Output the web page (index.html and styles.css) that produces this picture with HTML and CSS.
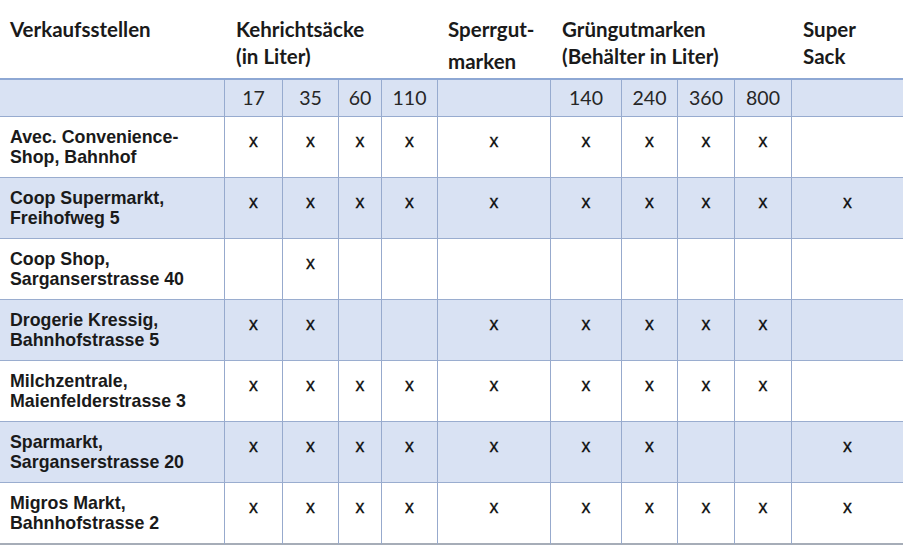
FILE: index.html
```html
<!DOCTYPE html>
<html lang="de">
<head>
<meta charset="utf-8">
<title>Verkaufsstellen</title>
<link rel="stylesheet" href="styles.css">
</head>
<body>
<table class="grid">
  <colgroup>
    <col class="c-name">
    <col class="c-17"><col class="c-35"><col class="c-60"><col class="c-110">
    <col class="c-sperr">
    <col class="c-140"><col class="c-240"><col class="c-360"><col class="c-800">
    <col class="c-super">
  </colgroup>
  <thead>
    <tr class="head">
      <th class="h-name">Verkaufsstellen</th>
      <th colspan="4">Kehrichtsäcke<br>(in Liter)</th>
      <th class="h-sperr"><span class="l1">Sperrgut-</span><span class="l2">marken</span></th>
      <th colspan="4">Grüngutmarken<br>(Behälter in Liter)</th>
      <th>Super<br>Sack</th>
    </tr>
    <tr class="sizes">
      <td class="first"></td>
      <td>17</td><td>35</td><td>60</td><td>110</td>
      <td></td>
      <td>140</td><td>240</td><td>360</td><td>800</td>
      <td></td>
    </tr>
  </thead>
  <tbody>
    <tr>
      <td class="name">Avec. Convenience-<br>Shop, Bahnhof</td>
      <td class="m">x</td><td class="m">x</td><td class="m">x</td><td class="m">x</td>
      <td class="m">x</td>
      <td class="m">x</td><td class="m">x</td><td class="m">x</td><td class="m">x</td>
      <td class="m"></td>
    </tr>
    <tr class="band">
      <td class="name">Coop Supermarkt,<br>Freihofweg 5</td>
      <td class="m">x</td><td class="m">x</td><td class="m">x</td><td class="m">x</td>
      <td class="m">x</td>
      <td class="m">x</td><td class="m">x</td><td class="m">x</td><td class="m">x</td>
      <td class="m">x</td>
    </tr>
    <tr>
      <td class="name">Coop Shop,<br>Sarganserstrasse 40</td>
      <td class="m"></td><td class="m">x</td><td class="m"></td><td class="m"></td>
      <td class="m"></td>
      <td class="m"></td><td class="m"></td><td class="m"></td><td class="m"></td>
      <td class="m"></td>
    </tr>
    <tr class="band">
      <td class="name">Drogerie Kressig,<br>Bahnhofstrasse 5</td>
      <td class="m">x</td><td class="m">x</td><td class="m"></td><td class="m"></td>
      <td class="m">x</td>
      <td class="m">x</td><td class="m">x</td><td class="m">x</td><td class="m">x</td>
      <td class="m"></td>
    </tr>
    <tr>
      <td class="name">Milchzentrale,<br>Maienfelderstrasse 3</td>
      <td class="m">x</td><td class="m">x</td><td class="m">x</td><td class="m">x</td>
      <td class="m">x</td>
      <td class="m">x</td><td class="m">x</td><td class="m">x</td><td class="m">x</td>
      <td class="m"></td>
    </tr>
    <tr class="band">
      <td class="name">Sparmarkt,<br>Sarganserstrasse 20</td>
      <td class="m">x</td><td class="m">x</td><td class="m">x</td><td class="m">x</td>
      <td class="m">x</td>
      <td class="m">x</td><td class="m">x</td><td class="m"></td><td class="m"></td>
      <td class="m">x</td>
    </tr>
    <tr class="last">
      <td class="name">Migros Markt,<br>Bahnhofstrasse 2</td>
      <td class="m">x</td><td class="m">x</td><td class="m">x</td><td class="m">x</td>
      <td class="m">x</td>
      <td class="m">x</td><td class="m">x</td><td class="m">x</td><td class="m">x</td>
      <td class="m">x</td>
    </tr>
  </tbody>
</table>
</body>
</html>
```
FILE: styles.css
```css
html, body {
  margin: 0;
  padding: 0;
  background: #ffffff;
}

.grid {
  table-layout: fixed;
  width: 903px;
  border-collapse: separate;
  border-spacing: 0;
  color: #1e1e1e;
}

.c-name { width: 224px; }
.c-17 { width: 58px; }
.c-35 { width: 56px; }
.c-60 { width: 43px; }
.c-110 { width: 56px; }
.c-sperr { width: 113px; }
.c-140 { width: 71px; }
.c-240 { width: 56px; }
.c-360 { width: 57px; }
.c-800 { width: 57px; }
.c-super { width: 112px; }

.grid th,
.grid td {
  padding: 0;
}

/* header row */
.head th {
  height: 62px;
  padding: 16px 0 0 12px;
  text-align: left;
  vertical-align: top;
  font-family: Lato, "Open Sans", sans-serif;
  font-weight: 700;
  font-size: 20.5px;
  line-height: 27px;
  color: #1a1a1a;
  border-bottom: 2px solid #8ea8d4;
}

.head .h-name {
  padding-left: 10px;
}

.head .h-sperr {
  padding-left: 11px;
}

.h-sperr .l1,
.h-sperr .l2 {
  display: block;
}

.h-sperr .l2 {
  margin-top: 5px;
}

/* sizes row */
.sizes td {
  background: #d9e2f3;
  text-align: center;
  vertical-align: middle;
  font-family: Lato, "Open Sans", sans-serif;
  font-size: 19.5px;
  color: #262626;
  border-bottom: 1px solid #97abcf;
  border-left: 1px solid #97abcf;
  padding-bottom: 2px;
  height: 34px;
}

.sizes td.first {
  border-left: none;
}

/* body rows */
tbody td {
  height: 60px;
  vertical-align: top;
  border-bottom: 1px solid #9aadcf;
  border-left: 1px solid #97aacd;
  font-family: "Liberation Sans", Arial, sans-serif;
  font-size: 17.8px;
  line-height: 20px;
  color: #1a1a1a;
}

tbody .band td {
  background: #d9e2f3;
}

tbody td.name {
  border-left: none;
  padding: 10px 0 0 10px;
  height: 50px;
  font-weight: 700;
}

tbody td.m {
  text-align: center;
  padding-top: 14px;
  height: 46px;
  color: #0d0d0d;
  -webkit-text-stroke: 0.3px #0d0d0d;
}

tbody tr.last td {
  border-bottom: 2px solid #a6adb8;
}
```
